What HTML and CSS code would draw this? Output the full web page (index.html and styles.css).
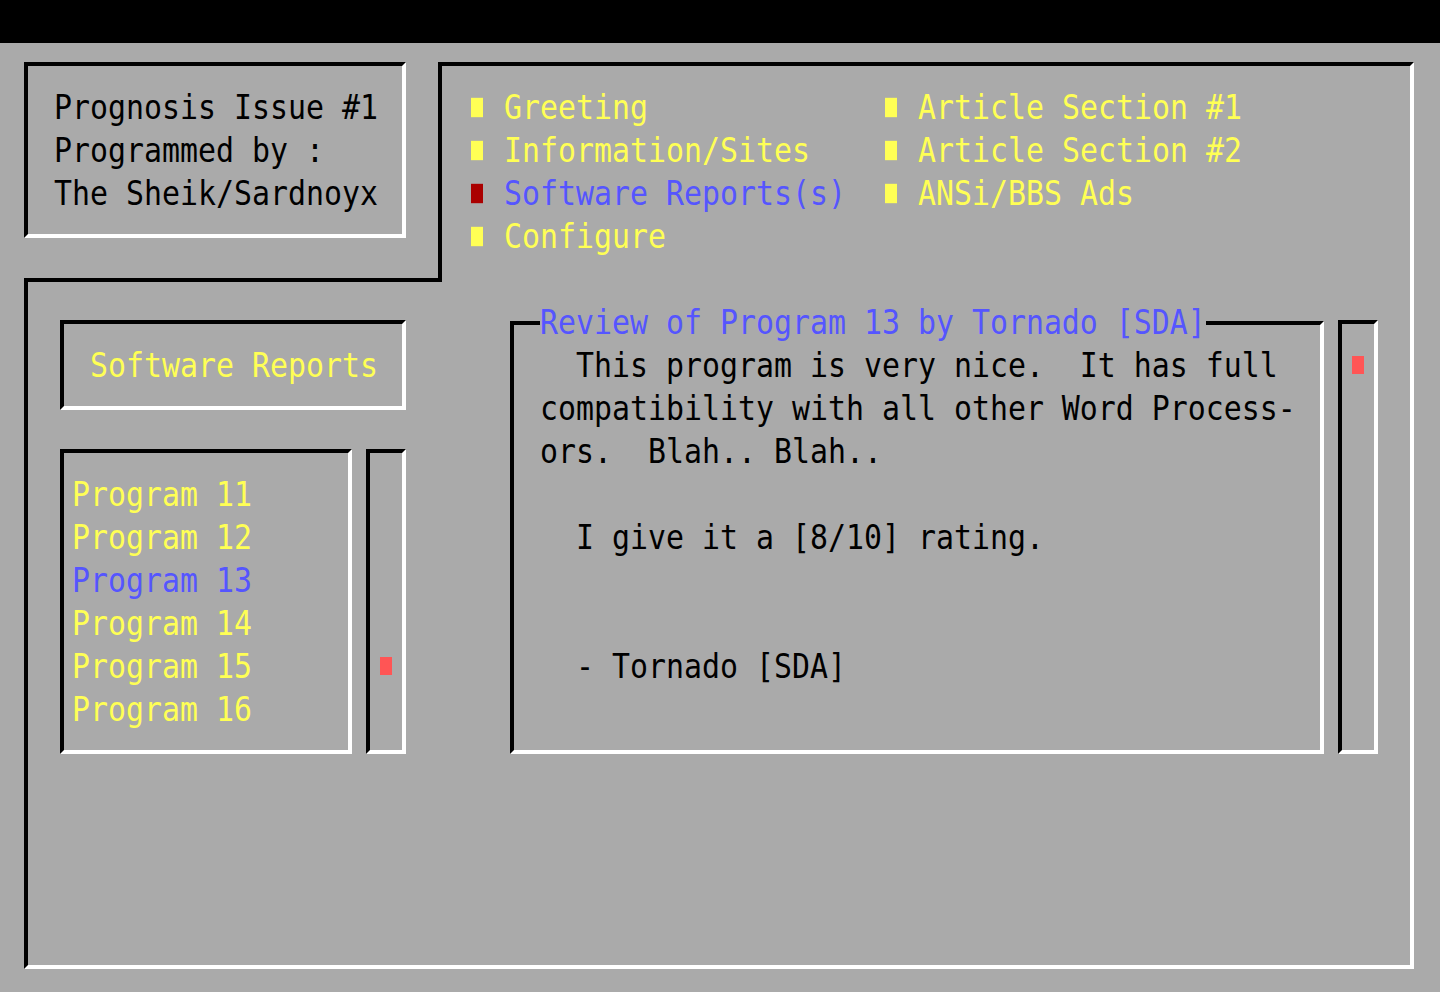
FILE: index.html
```html
<!DOCTYPE html>
<html lang="en">
  <head>
    <meta charset="utf-8">
    <title>Prognosis Issue #1</title>
    <link rel="stylesheet" href="styles.css">
  </head>

  <body>
    <div class="screen">
      <div class="topbar"></div>

      <!-- title box, sits in the notch of the main frame -->
      <div class="box about">
        <div class="ln">Prognosis Issue #1</div>
        <div class="ln">Programmed by :</div>
        <div class="ln">The Sheik/Sardnoyx</div>
      </div>

      <div class="menu-panel">
        <ul class="menu">
          <li class="ln"><span class="dot"></span>Greeting</li>
          <li class="ln"><span class="dot"></span>Information/Sites</li>
          <li class="ln active"><span class="dot"></span>Software Reports(s)</li>
          <li class="ln"><span class="dot"></span>Configure</li>
          <li class="ln"><span class="dot"></span>Article Section #1</li>
          <li class="ln"><span class="dot"></span>Article Section #2</li>
          <li class="ln"><span class="dot"></span>ANSi/BBS Ads</li>
        </ul>
      </div>

      <div class="body-panel"></div>

      <div class="box section-title">
        <div class="ln">Software Reports</div>
      </div>

      <div class="box programs">
        <div class="ln">Program 11</div>
        <div class="ln">Program 12</div>
        <div class="ln active">Program 13</div>
        <div class="ln">Program 14</div>
        <div class="ln">Program 15</div>
        <div class="ln">Program 16</div>
      </div>
      <div class="box scroll programs-scroll">
        <span class="thumb" style="--pos: 4"></span>
      </div>

      <fieldset class="box review">
        <legend><span class="ln">Review of Program 13 by Tornado [SDA]</span></legend>
        <div class="ln">  This program is very nice.  It has full</div>
        <div class="ln">compatibility with all other Word Process-</div>
        <div class="ln">ors.  Blah.. Blah..</div>
        <div class="ln"></div>
        <div class="ln">  I give it a [8/10] rating.</div>
        <div class="ln"></div>
        <div class="ln"></div>
        <div class="ln">  - Tornado [SDA]</div>
      </fieldset>
      <div class="box scroll review-scroll">
        <span class="thumb" style="--pos: 0"></span>
      </div>
    </div>
  </body>
</html>
```

FILE: styles.css
```css
html, body {
  margin: 0;
  background: #aaaaaa;
  overflow: hidden;
}
body {
  font-family: "DejaVu Sans Mono", "Liberation Mono", monospace;
  font-size: 29.9px;
  line-height: 43px;
  color: #000;
}

/* 80 x 23 text cells */
.screen {
  display: grid;
  grid-template-columns: repeat(80, 18px);
  grid-template-rows: repeat(23, 43px);
}
.topbar {
  grid-column: 1 / -1;
  grid-row: 1;
  background: #000;
}

.ln {
  height: 43px;
  white-space: pre;
  transform: scaleY(1.14);
}

/* frames are drawn through the middle of a cell */
.box {
  border-style: solid;
  border-width: 4px;
  border-color: #000 #fff #fff #000;
  margin: 19px 8px 20px 6px;
  padding: 20px 0 0 8px;
  min-width: 0;
}

.about {
  grid-column: 2 / 24;
  grid-row: 2 / 7;
  padding-left: 26px;
}

.menu-panel {
  grid-column: 25 / 80;
  grid-row: 2 / 8;
  margin: 19px 8px 19px 6px;
  border-top: 4px solid #000;
  border-left: 4px solid #000;
  border-right: 4px solid #fff;
  padding: 20px 0 0 26px;
}
.menu {
  list-style: none;
  margin: 0;
  padding: 0;
  display: grid;
  grid-template-columns: 414px 1fr;
  grid-template-rows: repeat(4, 43px);
  grid-auto-flow: column;
  color: #ffff55;
}
.menu li {
  display: flex;
  align-items: center;
}
.dot {
  display: inline-block;
  width: 12px;
  height: 17px;
  margin: 0 21px 0 3px;
  background: #ffff55;
}
.menu .active {
  color: #5555ff;
}
.menu .active .dot {
  background: #aa0000;
}

.body-panel {
  grid-column: 2 / 80;
  grid-row: 7 / 24;
  margin: 20px 8px 20px 6px;
  border-left: 4px solid #000;
  border-right: 4px solid #fff;
  border-bottom: 4px solid #fff;
  /* top edge only runs up to the menu frame */
  background: linear-gradient(#000, #000) no-repeat;
  background-origin: border-box;
  background-size: 418px 4px;
  background-position: 0 0;
}

.section-title {
  grid-column: 4 / 24;
  grid-row: 8 / 11;
  padding-left: 26px;
  color: #ffff55;
}

.programs {
  grid-column: 4 / 21;
  grid-row: 11 / 19;
  color: #ffff55;
}
.programs .active {
  color: #5555ff;
}

.scroll {
  padding-left: 8px;
}
.programs-scroll {
  grid-column: 21 / 24;
  grid-row: 11 / 19;
}
.review-scroll {
  grid-column: 75 / 78;
  grid-row: 8 / 19;
}
.thumb {
  display: block;
  width: 12px;
  height: 18px;
  margin: calc(var(--pos) * 43px + 12px) 0 0 2px;
  background: #ff5555;
}

.review {
  grid-column: 29 / 75;
  grid-row: 8 / 19;
  margin-top: 0;
  padding: 0 0 0 26px;
}
.review legend {
  padding: 0;
  margin: 0;
  color: #5555ff;
}
.review legend .ln {
  display: block;
}
```
